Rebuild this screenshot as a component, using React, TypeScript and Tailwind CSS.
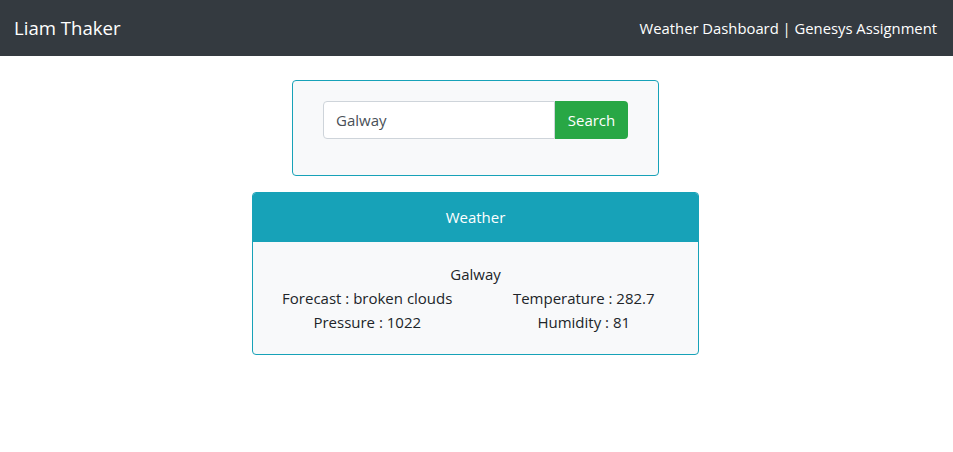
export default function App() {
  return (
    <div className="min-h-screen bg-white text-[#212529] font-['Open_Sans',sans-serif] text-[15px]">
      <nav className="flex h-14 items-center justify-between bg-[#343a40] pl-[14px] pr-4 text-white">
        <span className="text-[18.6px]">Liam Thaker</span>
        <span className="text-[14.8px]">Weather Dashboard | Genesys Assignment</span>
      </nav>

      <div className="flex flex-col items-center pt-6">
        <div className="mr-[2px] w-[367px] rounded border border-[#17a2b8] bg-[#f8f9fa] px-[30px] pt-5 pb-9">
          <div className="flex h-[38px]">
            <input
              defaultValue="Galway"
              className="min-w-0 flex-1 rounded-l border border-[#ced4da] bg-white px-3 text-[#495057] outline-none"
            />
            <button className="w-[73px] rounded-r bg-[#28a745] text-white">Search</button>
          </div>
        </div>

        <div className="mt-4 mr-[2px] w-[447px] overflow-hidden rounded border border-[#17a2b8] bg-[#f8f9fa]">
          <div className="flex h-[49px] items-center justify-center bg-[#17a2b8] text-white">Weather</div>
          <div className="px-[6px] py-5 leading-6">
            <div className="text-center">Galway</div>
            <div className="grid grid-cols-2 text-center">
              <div>Forecast : broken clouds</div>
              <div>Temperature : 282.7</div>
              <div>Pressure : 1022</div>
              <div>Humidity : 81</div>
            </div>
          </div>
        </div>
      </div>
    </div>
  );
}
